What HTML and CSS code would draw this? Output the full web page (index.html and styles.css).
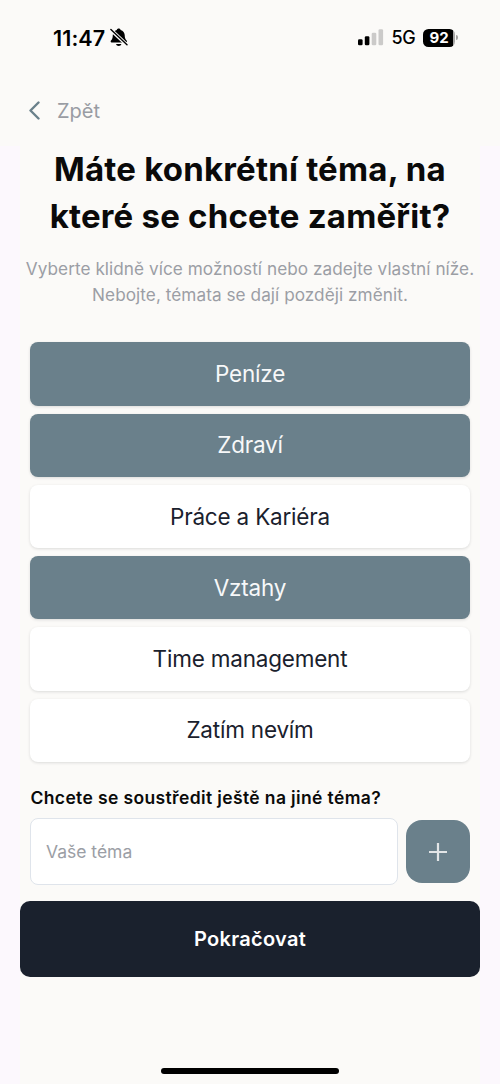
FILE: index.html
```html
<!doctype html>
<html lang="cs">
<head>
    <meta charset="utf-8">
    <meta name="viewport" content="width=device-width, initial-scale=1">
    <title>Výběr tématu</title>
    <link rel="stylesheet" href="styles.css">
</head>
<body>
    <!-- Status bar -->
    <div class="status-bar">
        <div class="clock">
            <span class="time">11:47</span>
            <svg class="bell" width="18" height="19" viewBox="0 0 18 19">
                <path d="M8.7.5C9.7.5 10.4 1.1 10.6 1.9c2.6.7 4 2.6 4.1 5.2.1 3 .5 4 1.9 5.4.6.6.4 2-.6 2H1.6c-1 0-1.2-1.4-.6-2 1.4-1.4 1.7-2.4 1.8-5.4C2.9 4.5 4.2 2.6 6.800 1.900 7 1.100 7.700.5 8.700.5z"/>
                <path d="M6 16h5.400c-.3 1.300-1.400 2-2.700 2S6.300 17.300 6 16z"/>
                <path d="M.6 1.600 17 17" stroke="#fbfaf8" stroke-width="3.600"/>
                <path d="M.9 1.500 17 16.700" stroke="#000" stroke-width="1.400" stroke-linecap="round"/>
            </svg>
        </div>
        <div class="indicators">
            <svg class="signal" width="26" height="17" viewBox="0 0 26 17">
                <rect x="0" y="10.3" width="4.6" height="6" rx="1.3"/>
                <rect x="6.8" y="7.3" width="4.6" height="9" rx="1.3"/>
                <rect class="off" x="13.7" y="3.8" width="4.6" height="12.5" rx="1.3"/>
                <rect class="off" x="20.5" y=".3" width="4.6" height="16" rx="1.3"/>
            </svg>
            <span class="network">5G</span>
            <div class="battery"><span class="level">92</span></div>
        </div>
    </div>

    <nav class="nav">
        <a class="back" href="#">
            <svg width="12" height="20" viewBox="0 0 12 20">
                <path d="M9.5 1.5l-8 8 8 8"/>
            </svg>
            <span>Zpět</span>
        </a>
    </nav>

    <main class="content">
        <h1 class="title">Máte konkrétní téma, na<br>které se chcete zaměřit?</h1>
        <p class="subtitle">Vyberte klidně více možností nebo zadejte vlastní níže.<br>Nebojte, témata se dají později změnit.</p>

        <div class="topics">
            <button class="topic selected">Peníze</button>
            <button class="topic selected">Zdraví</button>
            <button class="topic">Práce a Kariéra</button>
            <button class="topic selected">Vztahy</button>
            <button class="topic">Time management</button>
            <button class="topic">Zatím nevím</button>
        </div>

        <div class="custom">
            <label class="custom-label" for="topic">Chcete se soustředit ještě na jiné téma?</label>
            <div class="custom-row">
                <input class="custom-input" id="topic" type="text" placeholder="Vaše téma">
                <button class="add" aria-label="Přidat">
                    <svg width="18" height="18" viewBox="0 0 18 18">
                        <path d="M9 0v18M0 9h18"/>
                    </svg>
                </button>
            </div>
        </div>

        <button class="continue">Pokračovat</button>
    </main>

    <div class="home-indicator"></div>
</body>
</html>
```

FILE: styles.css
```css
* {
    box-sizing: border-box;
}

body {
    margin: 0;
    height: 1084px;
    display: flex;
    flex-direction: column;
    align-items: center;
    background: #fcf8fd;
    font-family: Inter, "Liberation Sans", sans-serif;
    color: #0a0a0a;
    overflow: hidden;
}

button {
    border: none;
    padding: 0;
    font-family: inherit;
}

/* Status bar */
.status-bar {
    width: 100%;
    height: 75px;
    padding: 0 42px 0 53px;
    display: flex;
    justify-content: space-between;
    align-items: center;
    background: #fbfaf8;
    color: #000;
}

.clock,
.indicators {
    display: flex;
    align-items: center;
}

.clock {
    gap: 5px;
}

.time {
    font-size: 21.5px;
    font-weight: 600;
    letter-spacing: 0.1px;
}

.signal .off {
    fill: #cbcac9;
}

.network {
    margin: 0 8px;
    font-size: 18px;
    font-weight: 500;
    letter-spacing: -0.6px;
}

.battery {
    display: flex;
    align-items: center;
}

.battery::after {
    content: "";
    width: 2px;
    height: 5px;
    margin-left: 1px;
    border-radius: 0 2px 2px 0;
    background: #a5a4a3;
}

.level {
    width: 32px;
    height: 18px;
    border-radius: 5.5px;
    background: linear-gradient(90deg, #000 30px, #a9a8a7 30px);
    color: #fff;
    font-size: 15px;
    font-weight: 700;
    line-height: 18px;
    text-align: center;
}

/* Back link */
.nav {
    width: 100%;
    height: 71px;
    padding: 0 29px;
    display: flex;
    align-items: center;
    background: #fbfaf8;
}

.back {
    display: flex;
    align-items: center;
    gap: 16px;
    color: #999ca3;
    font-size: 20px;
    font-weight: 400;
    text-decoration: none;
}

.back path {
    fill: none;
    stroke: #6a808b;
    stroke-width: 2.4;
    stroke-linecap: round;
    stroke-linejoin: round;
}

/* Page content */
.content {
    width: 459.4px;
    flex: 1;
    display: flex;
    flex-direction: column;
    background: #fbfaf8;
}

.title {
    margin: 0;
    font-size: 33px;
    font-weight: 700;
    line-height: 47px;
    letter-spacing: 0.2px;
    text-align: center;
    white-space: nowrap;
}

.subtitle {
    margin: 16px 0 0;
    color: #9b9ea5;
    font-size: 17.2px;
    font-weight: 400;
    line-height: 25.5px;
    letter-spacing: 0.05px;
    text-align: center;
    white-space: nowrap;
}

.topics {
    margin: 35.3px 10.2px 0;
    display: flex;
    flex-direction: column;
    gap: 8px;
}

.topic {
    height: 63.3px;
    padding-bottom: 1px;
    border-radius: 8px;
    background: #fff;
    box-shadow: 0 1px 3px rgba(26, 32, 44, 0.14);
    color: #1a212d;
    font-size: 22.5px;
    font-weight: 400;
    letter-spacing: -0.2px;
}

.topic.selected {
    background: #6a808b;
    color: #f7f8f9;
}

/* Custom topic */
.custom {
    margin: 24px 10.2px 0;
}

.custom-label {
    display: block;
    height: 32px;
    font-size: 17.5px;
    font-weight: 600;
    line-height: 24px;
    letter-spacing: 0.37px;
    white-space: nowrap;
}

.custom-row {
    display: flex;
    align-items: center;
    gap: 8px;
}

.custom-input {
    flex: 1;
    min-width: 0;
    height: 67px;
    padding: 0 14.5px;
    border: 1px solid #dfe4eb;
    border-radius: 8px;
    background: #fff;
    font-family: inherit;
    font-size: 17.5px;
    font-weight: 400;
}

.custom-input::placeholder {
    color: #9b9ea5;
}

.add {
    width: 63.5px;
    height: 63.5px;
    display: flex;
    align-items: center;
    justify-content: center;
    border-radius: 16px;
    background: #6a808b;
}

.add path {
    stroke: #e2e5e7;
    stroke-width: 2.2;
}

.continue {
    height: 76px;
    margin-top: 16px;
    border-radius: 10px;
    background: #1a212d;
    color: #fff;
    font-size: 20px;
    font-weight: 600;
    letter-spacing: 0.3px;
}

.home-indicator {
    position: absolute;
    bottom: 10px;
    width: 178px;
    height: 6.5px;
    border-radius: 4px;
    background: #000;
}
```
